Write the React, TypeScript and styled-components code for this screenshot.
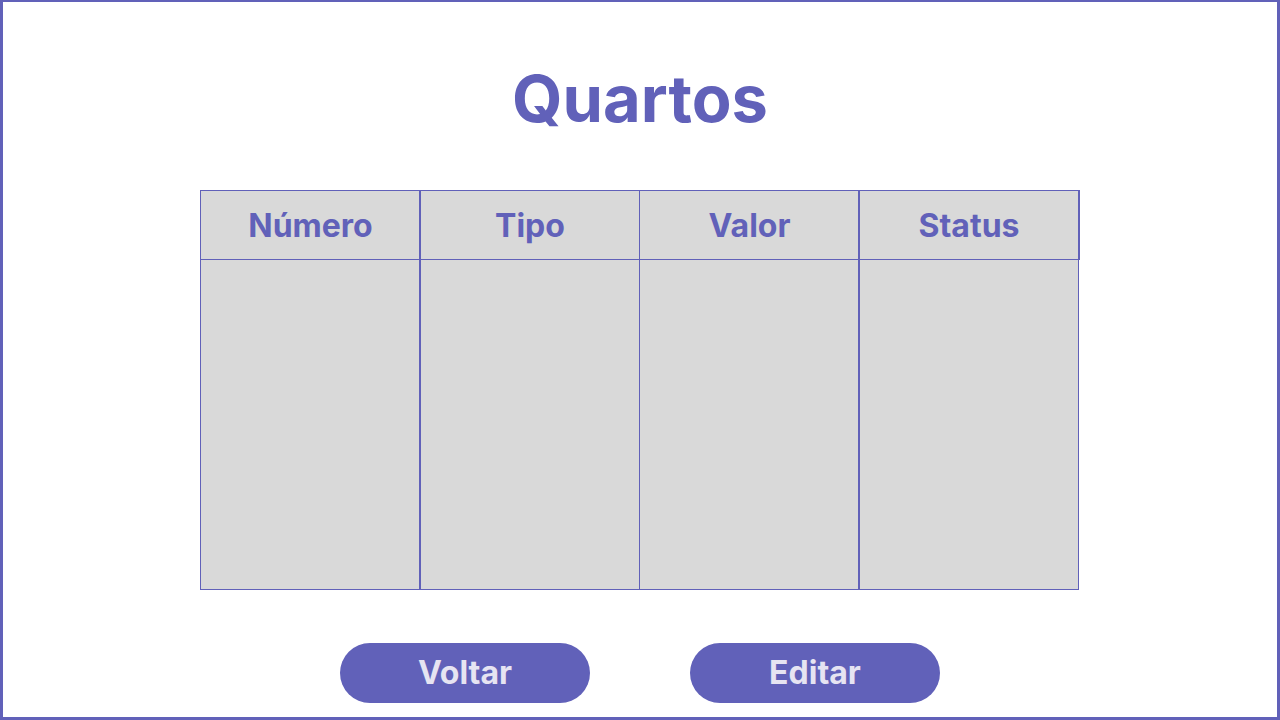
import React from "react";
import styled, { createGlobalStyle } from "styled-components";

const GlobalStyle = createGlobalStyle`
  html, body { margin: 0; padding: 0; background: #ffffff; }
  * { box-sizing: border-box; }
`;

const Page = styled.div`
  width: 1280px;
  height: 720px;
  border: 3px solid #6161b9;
  border-top-width: 2px;
  display: flex;
  flex-direction: column;
  align-items: center;
  font-family: Inter, "Noto Sans", sans-serif;
  background: #ffffff;
`;

const Title = styled.h1`
  margin: 59px 0 0;
  font-size: 65px;
  font-weight: 700;
  line-height: 76px;
  color: #6161b9;
`;

const Table = styled.div`
  margin-top: 53px;
  display: grid;
  grid-template-columns: 220px 219px 220px 221px;
  width: 880px;
`;

const Column = styled.div<{ $first?: boolean; $thick?: boolean }>`
  display: flex;
  flex-direction: column;
  border-left: ${(p) => (p.$first ? "1px" : p.$thick ? "2px" : "1px")} solid #6161b9;
  margin-left: ${(p) => (p.$first ? "0" : p.$thick ? "-1px" : "0")};
`;

const HeaderCell = styled.div<{ $last?: boolean }>`
  height: 70px;
  background: #d9d9d9;
  border-top: 1px solid #6161b9;
  border-bottom: 1px solid #6161b9;
  border-right: ${(p) => (p.$last ? "2px solid #6161b9" : "none")};
  display: flex;
  align-items: center;
  justify-content: center;
  font-size: 32px;
  font-weight: 700;
  color: #6161b9;
  padding-top: 1px;
`;

const BodyCell = styled.div<{ $last?: boolean }>`
  height: 330px;
  background: #d9d9d9;
  border-bottom: 1px solid #6161b9;
  border-right: ${(p) => (p.$last ? "1px solid #6161b9" : "none")};
  margin-right: ${(p) => (p.$last ? "1px" : "0")};
`;

const Buttons = styled.div`
  margin-top: 53px;
  display: flex;
  gap: 100px;
`;

const Button = styled.button`
  width: 250px;
  height: 60px;
  border: none;
  border-radius: 30px;
  background: #6161b9;
  color: #e6e4f2;
  font-family: Inter, "Noto Sans", sans-serif;
  font-size: 32px;
  font-weight: 700;
  cursor: pointer;
  padding: 0 0 1px;
`;

const columns = ["Número", "Tipo", "Valor", "Status"];

export default function App() {
  return (
    <>
      <GlobalStyle />
      <Page>
        <Title>Quartos</Title>
        <Table>
          {columns.map((c, i) => (
            <Column key={c} $first={i === 0} $thick={i === 1 || i === 3}>
              <HeaderCell $last={i === 3}>{c}</HeaderCell>
              <BodyCell $last={i === 3} />
            </Column>
          ))}
        </Table>
        <Buttons>
          <Button>Voltar</Button>
          <Button>Editar</Button>
        </Buttons>
      </Page>
    </>
  );
}
